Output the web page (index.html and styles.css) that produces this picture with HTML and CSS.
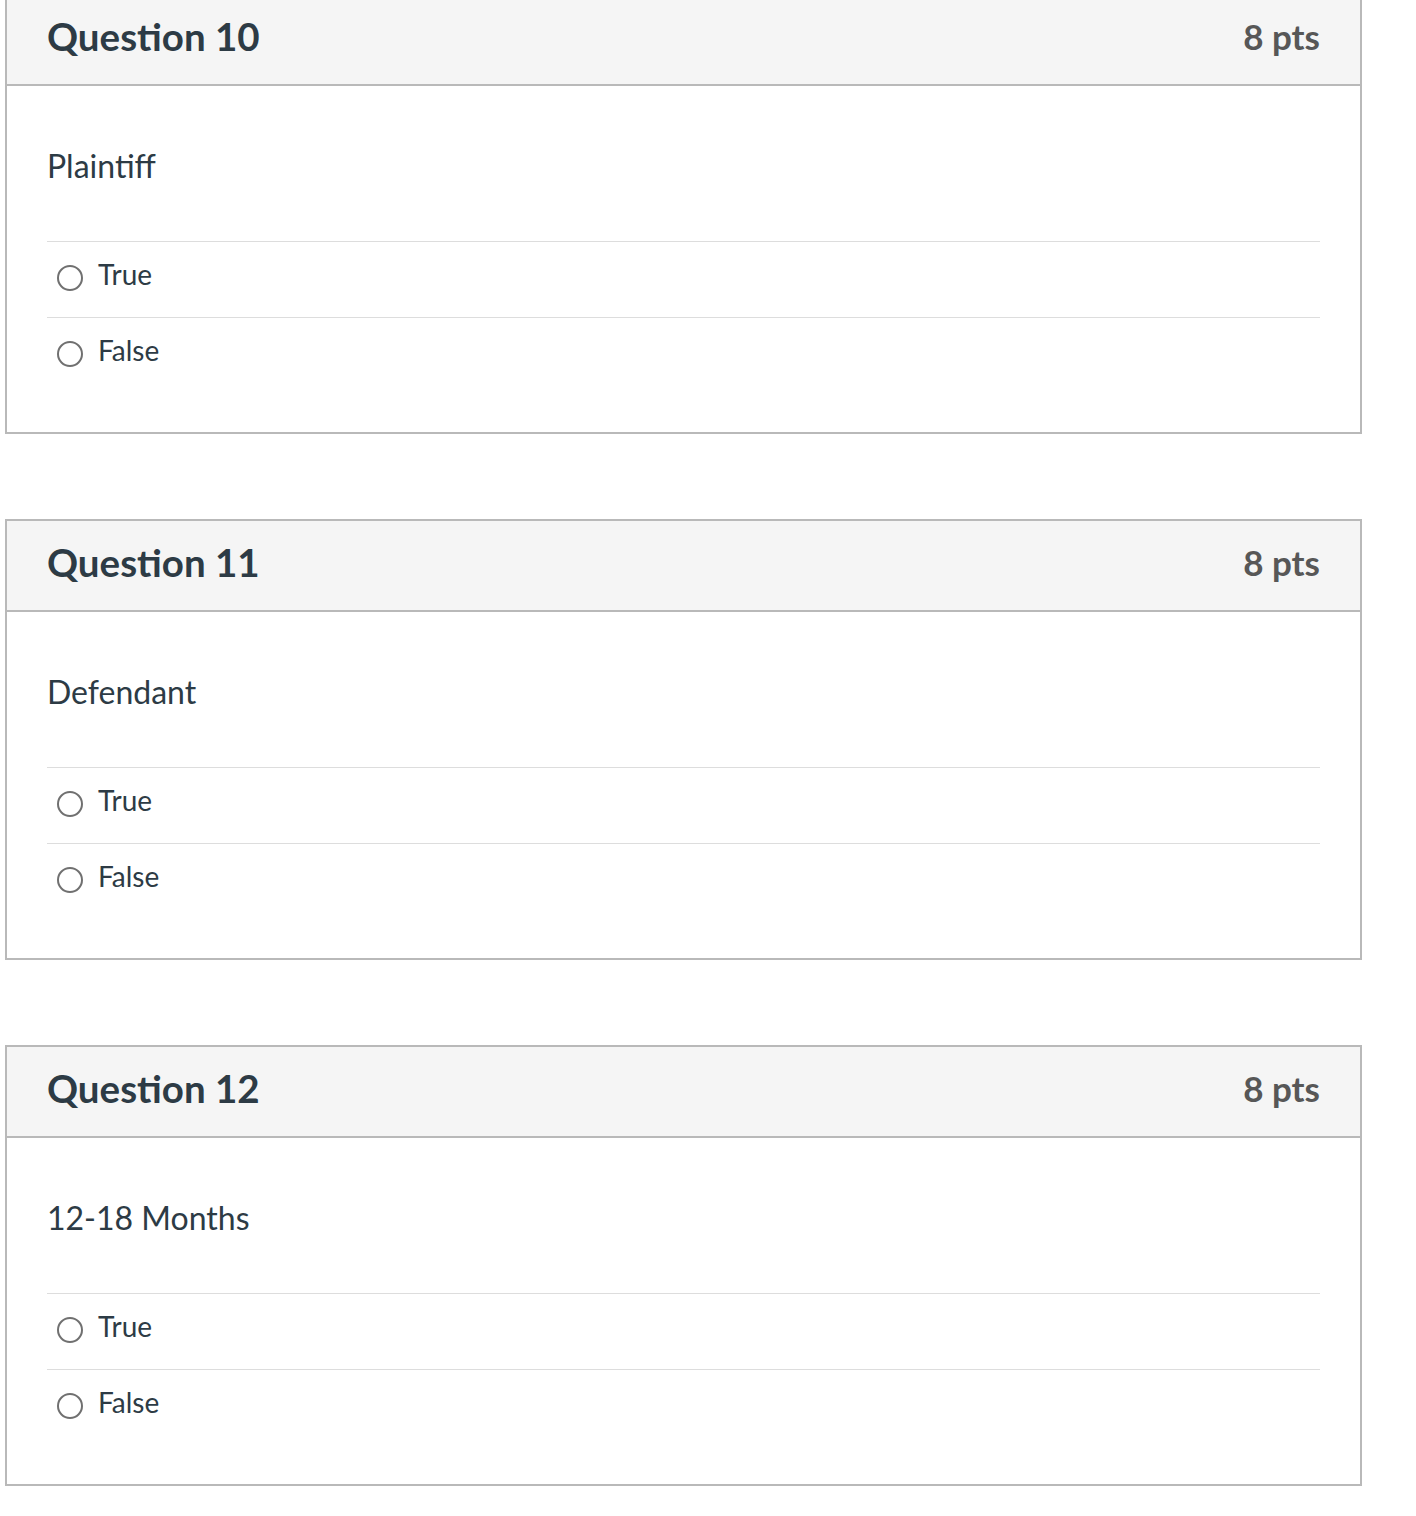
FILE: index.html
```html
<!DOCTYPE html>
<html lang="en">
<head>
<meta charset="utf-8">
<title>Quiz</title>
<link rel="stylesheet" href="styles.css">
</head>
<body>
<main class="quiz">
  <section class="question">
    <header class="question-header">
      <h2 class="question-title">Question 10</h2>
      <span class="question-points">8 pts</span>
    </header>
    <div class="question-body">
      <p class="question-text">Plaintiff</p>
      <div class="answers">
        <label class="answer"><span class="radio"></span><span class="answer-label">True</span></label>
        <label class="answer"><span class="radio"></span><span class="answer-label">False</span></label>
      </div>
    </div>
  </section>
  <section class="question">
    <header class="question-header">
      <h2 class="question-title">Question 11</h2>
      <span class="question-points">8 pts</span>
    </header>
    <div class="question-body">
      <p class="question-text">Defendant</p>
      <div class="answers">
        <label class="answer"><span class="radio"></span><span class="answer-label">True</span></label>
        <label class="answer"><span class="radio"></span><span class="answer-label">False</span></label>
      </div>
    </div>
  </section>
  <section class="question">
    <header class="question-header">
      <h2 class="question-title">Question 12</h2>
      <span class="question-points">8 pts</span>
    </header>
    <div class="question-body">
      <p class="question-text">12-18 Months</p>
      <div class="answers">
        <label class="answer"><span class="radio"></span><span class="answer-label">True</span></label>
        <label class="answer"><span class="radio"></span><span class="answer-label">False</span></label>
      </div>
    </div>
  </section>
</main>
</body>
</html>
```

FILE: styles.css
```css
* {
  box-sizing: border-box;
}

html, body {
  margin: 0;
  padding: 0;
  background: #ffffff;
}

body {
  font-family: Lato, "Open Sans", "Liberation Sans", sans-serif;
  color: #2d3b45;
}

.quiz {
  display: flex;
  flex-direction: column;
  gap: 85px;
  margin: -7px 0 0 5px;
  width: 1357px;
}

.question {
  border: 2px solid #b9b9b9;
  background: #ffffff;
}

.question-header {
  display: flex;
  align-items: center;
  justify-content: space-between;
  height: 91px;
  padding: 0 40px 6px;
  background: #f5f5f5;
  border-bottom: 2px solid #b9b9b9;
}

.question-title {
  margin: 0;
  font-size: 38.5px;
  font-weight: 700;
  color: #2d3b45;
  line-height: 1;
}

.question-points {
  font-size: 35px;
  font-weight: 700;
  color: #575757;
  line-height: 1;
}

.question-body {
  padding: 0 40px 39px;
  height: 346px;
}

.question-text {
  margin: 0 0 51px;
  padding-top: 56px;
  font-size: 32px;
  line-height: 48px;
  color: #2d3b45;
}

.answers {
  display: flex;
  flex-direction: column;
}

.answer {
  display: flex;
  align-items: center;
  height: 76px;
  border-top: 1px solid #dddddd;
  padding-left: 10px;
}

.radio {
  width: 26px;
  height: 26px;
  border: 2px solid #707070;
  border-radius: 50%;
  flex: none;
  margin-bottom: 3px;
}

.answer-label {
  margin-left: 15px;
  font-size: 28px;
  line-height: 1;
  color: #2d3b45;
  padding-bottom: 11px;
}
```
